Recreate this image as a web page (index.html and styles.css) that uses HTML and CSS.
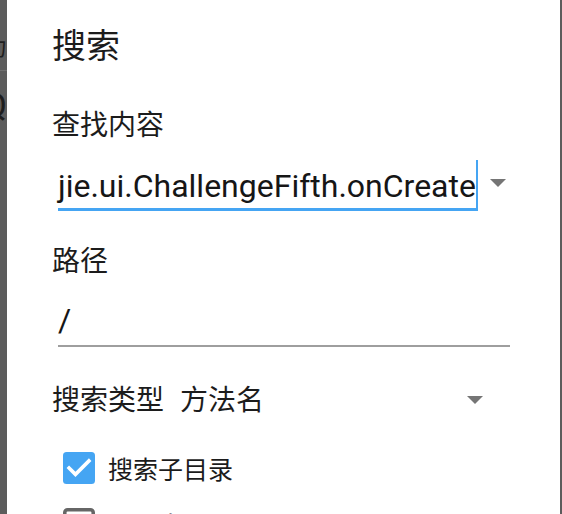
FILE: index.html
```html
<!DOCTYPE html>
<html lang="zh-CN">
<head>
<meta charset="utf-8">
<title>搜索</title>
<link rel="stylesheet" href="styles.css">
</head>
<body>
<div class="screen">
  <div class="behind">
    <div class="behind-glyph g1">力</div>
    <div class="behind-sep"></div>
    <div class="behind-glyph g2">Q</div>
  </div>
  <div class="dialog">
    <div class="title">搜索</div>
    <div class="label label-find">查找内容</div>
    <div class="field-row">
      <div class="field field-active">
        <span class="field-text">jie.ui.ChallengeFifth.onCreate</span>
        <span class="cursor"></span>
      </div>
      <span class="dropdown-arrow find-arrow"></span>
    </div>
    <div class="label label-path">路径</div>
    <div class="field field-path"><span class="field-text">/</span></div>
    <div class="type-row">
      <span class="type-label">搜索类型</span>
      <span class="type-value">方法名</span>
      <span class="dropdown-arrow type-arrow"></span>
    </div>
    <div class="check-row">
      <svg class="check-box" viewBox="3 3 18 18" width="32" height="32">
        <rect x="3" y="3" width="18" height="18" rx="2" fill="#45a5f3"/>
        <path d="M10 17l-5-5 1.41-1.41L10 14.17l7.59-7.59L19 8l-9 9z" fill="#ffffff"/>
      </svg>
      <span class="check-label">搜索子目录</span>
    </div>
    <div class="check-row check-row-2">
      <svg class="check-box" viewBox="3 3 18 18" width="32" height="32">
        <rect x="4" y="4" width="16" height="16" rx="1.6" fill="none" stroke="#666666" stroke-width="2"/>
      </svg>
      <span class="check-label">区分大小写</span>
    </div>
  </div>
  <div class="edge"></div>
</div>
</body>
</html>
```

FILE: styles.css
```css
html, body {
  margin: 0;
  padding: 0;
  background: #5c5c5c;
}
body {
  width: 562px;
  height: 514px;
  overflow: hidden;
}
.screen {
  display: flex;
  width: 562px;
  height: 514px;
  overflow: hidden;
}
.behind {
  width: 7px;
  flex: none;
  background: #5c5c5c;
  overflow: hidden;
  display: flex;
  flex-direction: column;
  align-items: flex-end;
}
.behind-glyph {
  color: #1e1e1e;
  font-family: "Noto Sans CJK SC", "Roboto", sans-serif;
  white-space: nowrap;
  flex: none;
}
.g1 {
  font-size: 22px;
  line-height: 26px;
  margin-top: 32px;
}
.behind-sep {
  width: 7px;
  height: 1px;
  background: #707070;
  margin-top: 12px;
  flex: none;
}
.g2 {
  font-family: "Roboto", sans-serif;
  font-size: 34px;
  line-height: 40px;
  margin-top: 14px;
}
.edge {
  width: 2px;
  flex: none;
  background: #5c5c5c;
}
.dialog {
  width: 553px;
  flex: none;
  background: #ffffff;
  padding: 23px 0 0 45px;
  box-sizing: border-box;
  color: #1c1c1c;
  font-family: "Noto Sans CJK SC", sans-serif;
}
.title {
  font-size: 34px;
  line-height: 42px;
  height: 42px;
}
.label {
  font-size: 28px;
  line-height: 36px;
  height: 36px;
}
.label-find {
  margin-top: 40px;
}
.field-row {
  display: flex;
  align-items: flex-start;
  margin-top: 19px;
}
.field {
  display: flex;
  align-items: flex-end;
  margin-left: 6px;
  font-family: "Roboto", "Noto Sans CJK SC", sans-serif;
  font-size: 32px;
  color: #161616;
}
.field-text {
  line-height: 40px;
  white-space: nowrap;
}
.field-active {
  width: 420px;
  border-bottom: 3px solid #45a5f3;
}
.field-active .field-text {
  margin-bottom: 2px;
}
.cursor {
  width: 2px;
  height: 48px;
  background: #45a5f3;
  flex: none;
  margin-left: 0;
}
.dropdown-arrow {
  width: 0;
  height: 0;
  border-left: 8px solid transparent;
  border-right: 8px solid transparent;
  border-top: 8px solid #757575;
  flex: none;
}
.find-arrow {
  margin-left: 12px;
  margin-top: 19px;
}
.label-path {
  margin-top: 30px;
}
.field-path {
  width: 452px;
  margin-top: 23px;
  padding-bottom: 5px;
  border-bottom: 2px solid #9e9e9e;
}
.type-row {
  display: flex;
  align-items: center;
  width: 431px;
  height: 36px;
  margin-top: 33px;
  font-size: 28px;
  line-height: 36px;
}
.type-value {
  margin-left: 16px;
}
.type-arrow {
  margin-left: auto;
  margin-top: 4px;
}
.check-row {
  display: flex;
  align-items: center;
  margin-top: 36px;
  margin-left: 11px;
  height: 32px;
}
.check-row-2 {
  margin-top: 24px;
}
.check-box {
  display: block;
  flex: none;
}
.check-label {
  margin-left: 13px;
  font-size: 25px;
  line-height: 32px;
}
```
